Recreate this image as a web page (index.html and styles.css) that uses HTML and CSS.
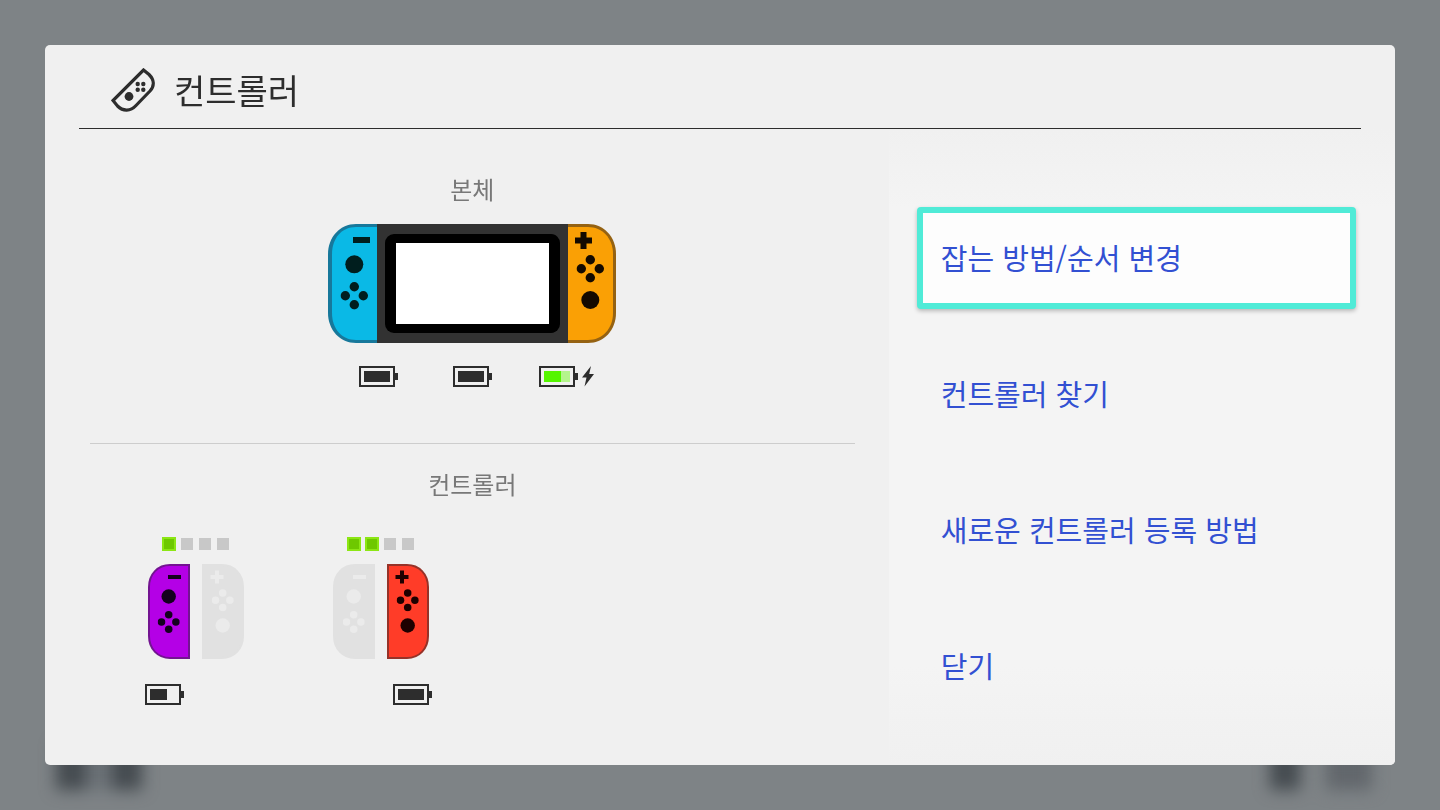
FILE: index.html
```html
<!DOCTYPE html>
<html lang="ko">
<head>
  <meta charset="UTF-8" />
  <meta name="viewport" content="width=device-width, initial-scale=1.0" />
  <title>컨트롤러</title>
  <link rel="stylesheet" href="styles.css">
</head>
<body>
  <!-- shared shapes -->
  <svg class="defs" aria-hidden="true">
    <symbol id="battery" viewBox="0 0 39 21">
      <path d="M1 1h34v19H1z" fill="none" stroke="#2d2d2d" stroke-width="2" />
      <path d="M36 7h3v7h-3z" fill="#2d2d2d" />
    </symbol>
    <symbol id="dpad" viewBox="-14 -14 28 28">
      <circle cy="-9" r="4.7" />
      <circle cx="-9" r="4.7" />
      <circle cx="9" r="4.7" />
      <circle cy="9" r="4.7" />
    </symbol>
    <symbol id="joycon-left" viewBox="0 0 42 95">
      <path class="shell" d="M41 1V94H22C10 94 1 85 1 72V23C1 10 10 1 22 1Z" />
      <g class="keys">
        <path d="M20 11h13v4H20z" />
        <circle cx="20.7" cy="32.5" r="7.2" />
        <use href="#dpad" x="9.5" y="46.8" width="22.4" height="22.4" />
      </g>
    </symbol>
    <symbol id="joycon-right" viewBox="0 0 42 95">
      <path class="shell" d="M1 1V94H20C32 94 41 85 41 72V23C41 10 32 1 20 1Z" />
      <g class="keys">
        <path d="M13 6.5h4v4.5h4.5v4H17v4.5h-4V15H8.5v-4H13z" />
        <use href="#dpad" x="9.5" y="25" width="22.4" height="22.4" />
        <circle cx="20.7" cy="61.5" r="7.2" />
      </g>
    </symbol>
  </svg>

  <div class="backdrop" aria-hidden="true">
    <div class="blobs left">
      <span class="blob"></span>
      <span class="blob"></span>
    </div>
    <div class="blobs">
      <span class="blob"></span>
      <span class="blob wide"></span>
    </div>
  </div>

  <main class="panel">
    <header class="header">
      <svg class="header-icon" viewBox="0 0 44 44" aria-hidden="true">
        <path d="M32.5 2L38 6.5C43.500 12 43.500 18 39 23L25 37.500C19.500 43.500 12 43.500 6.500 38L2 32.500Z" fill="none" stroke="#2d2d2d" stroke-width="3.2" />
        <circle cx="18" cy="28.5" r="4.4" />
        <circle cx="26.7" cy="16" r="2.200" />
        <circle cx="32.3" cy="16" r="2.200" />
        <circle cx="26.7" cy="21.7" r="2.200" />
        <circle cx="32.3" cy="21.7" r="2.200" />
      </svg>
      <h1>컨트롤러</h1>
    </header>

    <div class="content">
      <div class="devices">
        <section class="section console">
          <h2>본체</h2>
          <svg class="console-art" viewBox="0 0 288 119" aria-hidden="true">
            <path d="M50 0V119H28C12 119 0 106 0 89V30C0 13 12 0 28 0Z" fill="#17789b" />
            <path d="M50 3V116H28C14 116 4 105 4 89V30C4 14 14 3 28 3Z" fill="#0ab9e6" />
            <path d="M239 0V119H260C276 119 288 106 288 89V30C288 13 276 0 260 0Z" fill="#956212" />
            <path d="M239 3V116H260C274 116 285 105 285 89V30C285 14 274 3 260 3Z" fill="#faa005" />
            <path d="M49 0H240V119H49z" fill="#323232" />
            <rect x="57" y="10" width="175" height="99" rx="9" fill="#000" />
            <path d="M68 19H221V100H68z" fill="#fff" />
            <g fill="#001e1e">
              <path d="M25 13h17v6H25z" />
              <circle cx="26.3" cy="40.3" r="9" />
              <use href="#dpad" x="12.3" y="57.7" width="28" height="28" />
            </g>
            <g fill="#140a00">
              <path d="M252.5 8h6v5.500h5.500v6h-5.500v5.500h-6v-5.500H247v-6h5.500z" />
              <use href="#dpad" x="248.3" y="30.7" width="28" height="28" />
              <circle cx="262.3" cy="76" r="9" />
            </g>
          </svg>
          <div class="console-batteries">
            <svg class="battery" viewBox="0 0 39 21">
              <use href="#battery" />
              <path d="M5 5h26v11H5z" fill="#2d2d2d" />
            </svg>
            <svg class="battery" viewBox="0 0 39 21">
              <use href="#battery" />
              <path d="M5 5h26v11H5z" fill="#2d2d2d" />
            </svg>
            <div class="charging">
              <svg class="battery" viewBox="0 0 39 21">
                <use href="#battery" />
                <path d="M5 5h26v11H5z" fill="#b4f58c" />
                <path d="M5 5h17v11H5z" fill="#55f500" />
              </svg>
              <svg class="bolt" viewBox="0 0 12 21">
                <path d="M9 0L0 11.5H4.5L2.5 20.5L12 8H7.2Z" fill="#2d2d2d" />
              </svg>
            </div>
          </div>
        </section>

        <section class="section">
          <h2>컨트롤러</h2>
          <div class="players">
            <div class="player">
              <div class="lamps">
                <span class="lamp on"></span>
                <span class="lamp"></span>
                <span class="lamp"></span>
                <span class="lamp"></span>
              </div>
              <div class="pair">
                <svg class="joycon purple" viewBox="0 0 42 95"><use href="#joycon-left" /></svg>
                <svg class="joycon" viewBox="0 0 42 95"><use href="#joycon-right" /></svg>
              </div>
              <svg class="battery" viewBox="0 0 39 21">
                <use href="#battery" />
                <path d="M5 5h17v11H5z" fill="#2d2d2d" />
              </svg>
            </div>
            <div class="player">
              <div class="lamps">
                <span class="lamp on"></span>
                <span class="lamp on"></span>
                <span class="lamp"></span>
                <span class="lamp"></span>
              </div>
              <div class="pair">
                <svg class="joycon" viewBox="0 0 42 95"><use href="#joycon-left" /></svg>
                <svg class="joycon red" viewBox="0 0 42 95"><use href="#joycon-right" /></svg>
              </div>
              <svg class="battery right" viewBox="0 0 39 21">
                <use href="#battery" />
                <path d="M5 5h26v11H5z" fill="#2d2d2d" />
              </svg>
            </div>
          </div>
        </section>
      </div>

      <nav class="menu">
        <button class="menu-item selected" type="button">잡는 방법/순서 변경</button>
        <button class="menu-item" type="button">컨트롤러 찾기</button>
        <button class="menu-item" type="button">새로운 컨트롤러 등록 방법</button>
        <button class="menu-item" type="button">닫기</button>
      </nav>
    </div>
  </main>
</body>
</html>
```

FILE: styles.css
```css
* {
  box-sizing: border-box;
}

body {
  margin: 0;
  min-height: 100vh;
  padding: 45px;
  display: flex;
  background-color: #7e8386;
  color: #2d2d2d;
  font-family: "Noto Sans CJK KR", sans-serif;
}

h1, h2 {
  margin: 0;
  font-weight: 400;
}

svg {
  display: block;
}

.defs {
  position: absolute;
  width: 0;
  height: 0;
}

/* blurred screen behind the panel */
.backdrop {
  position: fixed;
  left: 56px;
  right: 68px;
  bottom: 20px;
  display: flex;
  justify-content: space-between;
  filter: blur(8px);
}

.blobs {
  display: flex;
  gap: 26px;
}

.blobs.left {
  background-color: #6c7277;
}

.blob {
  width: 30px;
  height: 46px;
  background-color: #454b50;
}

.blob.wide {
  width: 46px;
  background-color: #62676c;
}

.panel {
  position: relative;
  flex: 1;
  display: flex;
  flex-direction: column;
  background-color: #f0f0f0;
  border-radius: 5px;
  overflow: hidden;
}

.header {
  display: flex;
  align-items: center;
  gap: 19px;
  height: 84px;
  margin: 0 34px;
  padding: 7px 32px 0;
  border-bottom: 1px solid #2d2d2d;
}

.header-icon {
  width: 44px;
  height: 44px;
  fill: #2d2d2d;
}

.header h1 {
  font-size: 34px;
  line-height: 48px;
}

.content {
  flex: 1;
  display: grid;
  grid-template-columns: 5fr 3fr;
}

/* left side */
.devices {
  padding: 0 34px 0 45px;
}

.section {
  display: flex;
  flex-direction: column;
  align-items: center;
  padding-top: 22px;
}

.section h2 {
  color: #787878;
  font-size: 24px;
  line-height: 36px;
}

.section.console {
  padding: 42px 0 56px;
  border-bottom: 1px solid #cdcdcd;
}

.console-art {
  width: 288px;
  height: 119px;
  margin: 17px 0 23px;
}

.console-batteries {
  display: grid;
  grid-template-columns: repeat(3, 94px);
  justify-items: center;
}

.battery {
  width: 39px;
  height: 21px;
}

.charging {
  display: flex;
  gap: 4px;
}

.bolt {
  width: 12px;
  height: 21px;
}

.players {
  display: flex;
  align-self: stretch;
  gap: 83px;
  padding: 35px 55px 0;
}

.player {
  width: 102px;
}

.lamps {
  display: flex;
  justify-content: center;
  gap: 4px;
}

.lamp {
  width: 14px;
  height: 14px;
  border: 1px solid #f0f0f0;
  background-color: #c8c8c8;
}

.lamp.on {
  border: 2px solid #8ce614;
  background-color: #6ec800;
}

.pair {
  display: flex;
  justify-content: space-between;
  margin: 13px 3px 25px;
}

.joycon {
  width: 42px;
  height: 95px;
  fill: #e1e1e1;
  stroke: #e1e1e1;
  stroke-width: 2px;
  color: #ebebeb;
}

.joycon.purple {
  fill: #b400e6;
  stroke: #731491;
  color: #14001e;
}

.joycon.red {
  fill: #ff3c28;
  stroke: #963228;
  color: #1e0000;
}

.keys {
  fill: currentColor;
  stroke: none;
}

.battery.right {
  margin-left: auto;
}

/* right side */
.menu {
  display: flex;
  flex-direction: column;
  gap: 34px;
  padding: 78px 39px 0 28px;
  background: linear-gradient(#f0f0f0, #f4f4f4 80px, #f4f4f4 calc(100% - 100px), #f0f0f0);
}

.menu-item {
  height: 102px;
  padding: 0 18px 2px;
  border: 6px solid transparent;
  border-radius: 4px;
  background: none;
  color: #3250d2;
  font-family: inherit;
  font-size: 29px;
  line-height: 42px;
  text-align: left;
  cursor: pointer;
}

.menu-item.selected {
  border-color: #50ebd7;
  background-color: #fdfdfd;
  box-shadow: 0 2px 4px rgba(0, 0, 0, 0.25);
}
```
